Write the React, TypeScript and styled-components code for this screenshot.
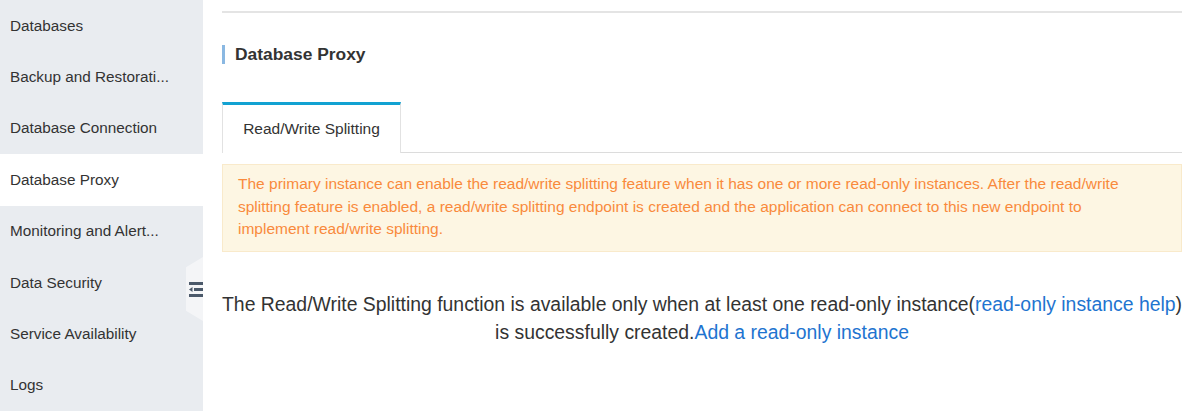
import React from "react";
import styled, { createGlobalStyle } from "styled-components";

const Global = createGlobalStyle`
  html, body { margin: 0; padding: 0; background: #fff; }
  body { font-family: "Liberation Sans", Arial, Helvetica, sans-serif; color: #333; }
`;

const Page = styled.div`
  display: flex;
  width: 1200px;
  height: 411px;
  overflow: hidden;
`;

const Sidebar = styled.nav`
  position: relative;
  flex: 0 0 203px;
  background: #e9ecf0;
  display: flex;
  flex-direction: column;
`;

const NavItem = styled.div<{ $active?: boolean }>`
  height: 51.4px;
  flex: 0 0 51.4px;
  display: flex;
  align-items: center;
  padding-left: 10px;
  font-size: 15.3px;
  color: #333;
  background: ${(p) => (p.$active ? "#fff" : "transparent")};
  white-space: nowrap;
`;

const Collapse = styled.div`
  position: absolute;
  right: 0;
  top: 257px;
  width: 17px;
  height: 64px;
  background: #f4f5f7;
  clip-path: polygon(0 16%, 100% 0, 100% 100%, 0 84%);
  display: flex;
  align-items: center;
  justify-content: flex-end;
`;

const Main = styled.main`
  flex: 1;
  padding: 11px 19px 0 19px;
  display: flex;
  flex-direction: column;
`;

const TopRule = styled.div`
  height: 2px;
  background: #e4e4e4;
`;

const Title = styled.h2`
  margin: 32px 0 0 0;
  height: 19px;
  display: flex;
  align-items: center;
  gap: 10px;
  font-size: 17.4px;
  font-weight: bold;
  color: #333;
  &::before {
    content: "";
    width: 3px;
    height: 19px;
    background: #8ab8e2;
  }
`;

const TabBar = styled.div`
  margin-top: 38px;
  display: flex;
  border-bottom: 1px solid #dcdcdc;
`;

const Tab = styled.div<{ $active?: boolean }>`
  width: 177px;
  height: 48px;
  border: 1px solid #e2e2e2;
  border-top: 3px solid ${(p) => (p.$active ? "#12a2d2" : "#e2e2e2")};
  border-bottom: none;
  margin-bottom: -1px;
  background: #fff;
  display: flex;
  align-items: center;
  justify-content: center;
  font-size: 15.5px;
  color: #333;
`;

const Alert = styled.div`
  margin-top: 11px;
  background: #fdf6e3;
  border: 1px solid #f9eacb;
  padding: 8px 15px 10px 15px;
  color: #f98a3c;
  font-size: 15.5px;
  line-height: 22.6px;
  white-space: nowrap;
`;

const Notice = styled.p`
  margin: 38px 0 0 0;
  text-align: center;
  font-size: 19.4px;
  line-height: 28px;
  color: #333;
  white-space: nowrap;
`;

const Link = styled.a`
  color: #1e74d0;
  text-decoration: none;
`;

const items = [
  "Databases",
  "Backup and Restorati...",
  "Database Connection",
  "Database Proxy",
  "Monitoring and Alert...",
  "Data Security",
  "Service Availability",
  "Logs",
];

export default function App() {
  return (
    <>
      <Global />
      <Page>
        <Sidebar>
          {items.map((t) => (
            <NavItem key={t} $active={t === "Database Proxy"}>
              {t}
            </NavItem>
          ))}
          <Collapse>
            <svg width="15" height="19" viewBox="0 0 15 19">
              <rect x="1" y="2" width="14" height="3" fill="#4b596a" />
              <rect x="6" y="8" width="9" height="3" fill="#4b596a" />
              <polygon points="1,9.5 4.5,7 4.5,12" fill="#4b596a" />
              <rect x="1" y="14" width="14" height="3" fill="#4b596a" />
            </svg>
          </Collapse>
        </Sidebar>
        <Main>
          <TopRule />
          <Title>Database Proxy</Title>
          <TabBar>
            <Tab $active>Read/Write Splitting</Tab>
          </TabBar>
          <Alert>
            The primary instance can enable the read/write splitting feature when it has one or more
            read-only instances. After the read/write
            <br />
            splitting feature is enabled, a read/write splitting endpoint is created and the
            application can connect to this new endpoint to
            <br />
            implement read/write splitting.
          </Alert>
          <Notice>
            The Read/Write Splitting function is available only when at least one read-only instance(
            <Link href="#">read-only instance help</Link>)
            <br />
            is successfully created.<Link href="#">Add a read-only instance</Link>
          </Notice>
        </Main>
      </Page>
    </>
  );
}
